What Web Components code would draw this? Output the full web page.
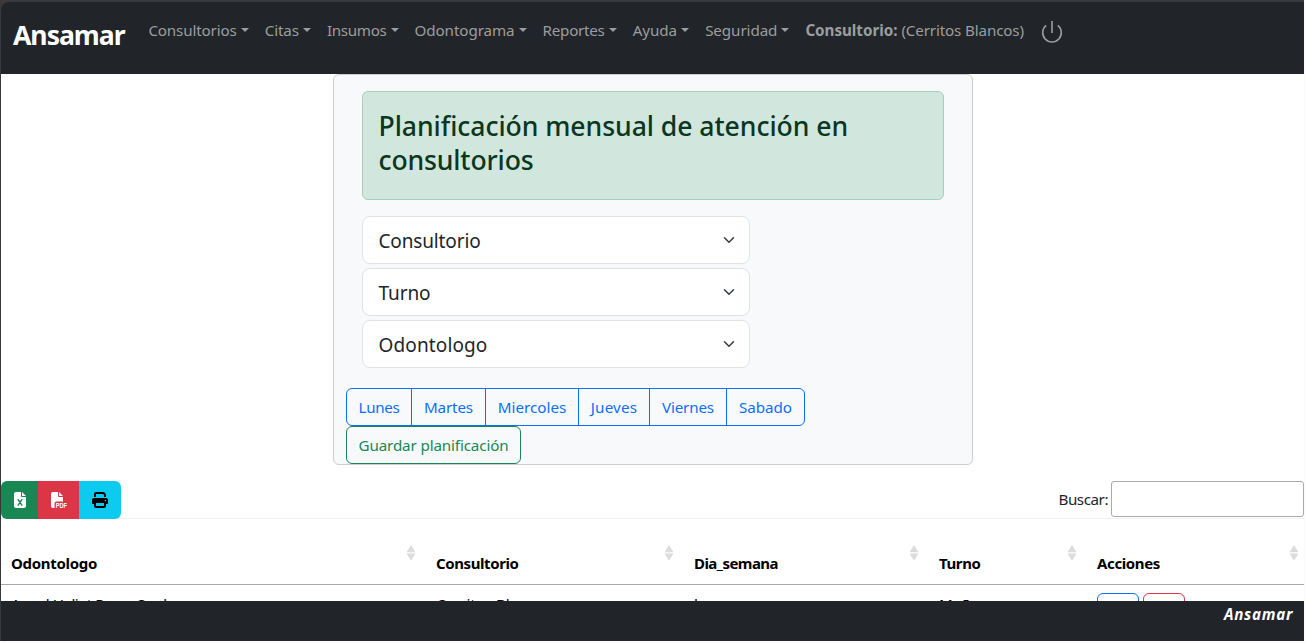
<!DOCTYPE html>
<html lang="es">
<head>
<meta charset="utf-8">
<title>Ansamar</title>
<style>
html,body{margin:0;height:100%;overflow:hidden}
body{font-family:"Noto Sans","Open Sans",sans-serif;font-size:15.2px;line-height:24px;color:#212529;background:#fcfcfc}
</style>
</head>
<body>
<app-shell>
  <nav-bar slot="top">
    <nav-item w="88.2">Consultorios</nav-item>
    <nav-item w="34.3">Citas</nav-item>
    <nav-item w="59.4">Insumos</nav-item>
    <nav-item w="100">Odontograma</nav-item>
    <nav-item w="62">Reportes</nav-item>
    <nav-item w="44.4">Ayuda</nav-item>
    <nav-item w="72.2">Seguridad</nav-item>
  </nav-bar>
  <plan-card>
    <plan-select w="102">Consultorio</plan-select>
    <plan-select w="52">Turno</plan-select>
    <plan-select w="109">Odontologo</plan-select>
    <day-group slot="days"></day-group>
  </plan-card>
  <table-tools></table-tools>
  <plan-table></plan-table>
  <page-footer slot="bottom"><fit-text w="69">Ansamar</fit-text></page-footer>
</app-shell>
<script>
function define(name, html, ready) {
  const tpl = document.createElement('template');
  tpl.innerHTML = html;
  customElements.define(name, class extends HTMLElement {
    constructor() {
      super();
      this.attachShadow({mode: 'open'}).append(tpl.content.cloneNode(true));
    }
    connectedCallback() { if (ready) ready(this, this.shadowRoot); }
  });
}

define('app-shell', `<style>
:host{display:flex;flex-direction:column;box-sizing:border-box;width:1304px;height:641px;border-left:1px solid #38383a;border-top:2px solid #3a3a3b;background:#3a3a3b}
main{flex:1;min-height:0;overflow:hidden;background:#fff}
</style><slot name="top"></slot><main><slot></slot></main><slot name="bottom"></slot>`);

define('nav-bar', `<style>
:host{display:flex;align-items:flex-start;height:72px;flex:none;background:#212529;border-top-left-radius:8px;color:#9b9d9e;box-sizing:border-box;padding-left:12px}
.brand{font-weight:700;font-size:26.6px;line-height:40px;color:#fff;margin:13px 14.4px 0 0;width:113px}
nav{display:flex;margin-top:8px}
.office{padding:8px 8px 0;display:flex;gap:4px;line-height:24px;margin-top:8px}
svg{margin:18px 0 0 9.4px}
</style>
<div class="brand"><fit-text w="111.5">Ansamar</fit-text></div>
<nav><slot></slot></nav>
<div class="office"><b><fit-text w="92">Consultorio:</fit-text></b><fit-text w="122.5">(Cerritos Blancos)</fit-text></div>
<svg width="22" height="24" viewBox="0 0 22 24" fill="none" stroke="#9b9d9e" stroke-width="1.6"><path d="M11 1v12M5.2 5.4a9.3 9.3 0 1 0 11.6 0"/></svg>`);

define('nav-item', `<style>
:host{display:flex;padding:8px 8px 0;line-height:24px}
i{width:0;height:0;border:4px solid transparent;border-top-color:currentColor;border-bottom:0;margin:10px 0 0 4.08px}
</style><fit-text><slot></slot></fit-text><i></i>`, (el, root) => {
  root.querySelector('fit-text').setAttribute('w', el.getAttribute('w'));
});

define('plan-card', `<style>
:host{display:block;box-sizing:border-box;width:640px;height:391px;margin:0 0 16px 332px;border:1px solid #cbccce;border-radius:6px;background:#f8f9fb;padding:16px 12px 0}
.body{padding:0 16px}
h3{box-sizing:border-box;height:109px;margin:0 0 16px;padding:17px 16px 0 15.5px;border:1px solid #a3cfbb;border-radius:6px;background:#d1e7dd;color:#0a3622;font-size:26.6px;line-height:34px;font-weight:500}
h3 fit-text{display:block}
.selects{display:grid;gap:4px;width:388px;margin-bottom:20px}
</style>
<div class="body"><h3><fit-text w="469.5">Planificación mensual de atención en</fit-text><fit-text w="155">consultorios</fit-text></h3>
<div class="selects"><slot></slot></div></div><slot name="days"></slot>`);

define('plan-select', `<style>
:host{display:flex;justify-content:space-between;align-items:center;box-sizing:border-box;height:48px;padding:1px 12px 0 15.5px;border:1px solid #dee2e6;border-radius:8px;background:#fff;font-size:19px;line-height:30px}
svg{margin-top:-2px}
</style><fit-text><slot></slot></fit-text><svg width="16" height="12" viewBox="0 0 16 16" fill="none" stroke="#343a40" stroke-linecap="round" stroke-linejoin="round" stroke-width="2"><path d="m2 5 6 6 6-6"/></svg>`, (el, root) => {
  root.querySelector('fit-text').setAttribute('w', el.getAttribute('w'));
});

define('day-group', `<style>
:host{display:block;color:#0d6efd}
.days{display:flex;box-sizing:border-box;width:459px;height:38px;border:1px solid #0d6efd;border-radius:6px}
.days span,.save{display:flex;justify-content:center;align-items:center}
.days span{box-sizing:border-box;border-right:1px solid #0d6efd}
.days span:last-child{border:0}
.save{box-sizing:border-box;width:175px;height:38px;border:1px solid #198754;border-radius:6px;color:#198754}
</style>
<div class="days">
<span style="width:65px"><fit-text w="41">Lunes</fit-text></span>
<span style="width:74px"><fit-text w="49">Martes</fit-text></span>
<span style="width:93px"><fit-text w="68.5">Miercoles</fit-text></span>
<span style="width:71px"><fit-text w="46.5">Jueves</fit-text></span>
<span style="width:77px"><fit-text w="52">Viernes</fit-text></span>
<span style="width:77px"><fit-text w="53">Sabado</fit-text></span>
</div><div class="save"><fit-text w="150">Guardar planificación</fit-text></div>`);

define('table-tools', `<style>
:host{display:flex;justify-content:space-between;align-items:flex-start;height:38px}
.export{display:flex;height:38px;position:relative}
.export span{display:flex;justify-content:center;align-items:center}
.export span:first-child{border-radius:6px 0 0 6px}
.export span:last-child{border-radius:0 6px 6px 0}
.export svg{overflow:visible}
label{display:flex;align-items:center;gap:3px}
input{box-sizing:border-box;width:193px;height:36px;border:1px solid #aaa;border-radius:3px;background:#fff;margin:0}
</style>
<div class="export">
<span style="width:37px;background:#198754"><svg width="12" height="16" viewBox="0 0 384 512"><path fill="#fff" d="M64 0C28.700 0 0 28.700 0 64V448c0 35.300 28.700 64 64 64H320c35.300 0 64-28.700 64-64V160H256c-17.700 0-32-14.300-32-32V0H64zM256 0V128H384L256 0z"/><path fill="none" stroke="#198754" stroke-width="48" stroke-linecap="round" d="M132 246l120 172M252 246l-120 172"/></svg></span>
<span style="width:41px;background:#dc3545"><svg width="16" height="16" viewBox="0 0 512 512"><path fill="#fff" d="M0 64C0 28.700 28.700 0 64 0H224V128c0 17.700 14.300 32 32 32H384V304H176c-35.300 0-64 28.700-64 64V512H64c-35.300 0-64-28.700-64-64V64zm384 64H256V0L384 128z"/><text x="150" y="508" textLength="362" lengthAdjust="spacingAndGlyphs" font-family="Liberation Sans" font-weight="bold" font-size="212" fill="#fff">PDF</text></svg></span>
<span style="width:42px;background:#0dcaf0"><svg width="16" height="16" viewBox="0 0 512 512"><path d="M128 0C92.700 0 64 28.700 64 64v96h64V64H354.700L384 93.300V160h64V93.300c0-17-6.700-33.300-18.700-45.300L400 18.700C388 6.700 371.700 0 354.700 0H128zM384 352v96H128V352H384zm64 32h32c17.700 0 32-14.300 32-32V256c0-35.300-28.700-64-64-64H64c-35.300 0-64 28.700-64 64v96c0 17.700 14.300 32 32 32H64v64c0 35.300 28.700 64 64 64H384c35.300 0 64-28.700 64-64V384zM432 248a24 24 0 1 1 0 48 24 24 0 1 1 0-48z"/></svg></span>
</div>
<label><fit-text w="49.5">Buscar:</fit-text><input></label>`);

define('plan-table', `<style>
:host{display:block;margin-top:-1px;width:1303px;overflow:hidden;color:#000}
.head,.row{display:grid;grid-template-columns:425px 258px 245px 158px 222px}
.head{box-sizing:border-box;height:67px;border-top:1px solid #f1f1f1;border-bottom:1px solid #aaa;font-weight:700;font-size:15px}
.head>div{display:flex;justify-content:space-between;padding:32px 10px 0}
.head svg{margin-top:-6px}
.row>div{padding:7px 10px 8px;white-space:nowrap}
.row>.actions{display:flex;gap:4px;padding-top:8px}
.actions span{box-sizing:border-box;width:42px;height:38px;border:1px solid #0d6efd;border-radius:6px}
.actions span+span{border-color:#dc3545}
</style>
<div class="head"></div>
<div class="row"><div><fit-text w="181">Angel Heliot Perez Cardona</fit-text></div><div><fit-text w="115">Cerritos Blancos</fit-text></div><div>lunes</div><div>Mañana</div><div class="actions"><span></span><span></span></div></div>`, (el, root) => {
  const columns = [['Odontologo', 86], ['Consultorio', 82.5], ['Dia_semana', 84], ['Turno', 41.5], ['Acciones', 63]];
  root.querySelector('.head').innerHTML = columns.map(([label, w]) =>
    `<div><fit-text w="${w}">${label}</fit-text><svg width="10" height="16" viewBox="0 0 10 16" fill="#dcdcdc"><path d="M5 0l4.500 7.300h-9zM.5 8.500h9L5 15.800z"/></svg></div>`).join('');
});

define('page-footer', `<style>
:host{display:flex;justify-content:flex-end;box-sizing:border-box;height:40px;flex:none;padding:1px 11px 0 0;background:#212529;color:#fff;font-weight:700;font-style:italic;font-size:15.2px}
</style><slot></slot>`);

/* Inline label that spreads its letters so the text takes exactly w pixels. */
define('fit-text', `<style>
:host{display:inline-block;white-space:nowrap}
span{display:inline-block}
</style><span><slot></slot></span>`, (el, root) => {
  const target = parseFloat(el.getAttribute('w'));
  let text = el.textContent.trim();
  if (!text && el.getRootNode().host) text = el.getRootNode().host.textContent.trim();
  const span = root.querySelector('span');
  const natural = span.getBoundingClientRect().width;
  span.style.letterSpacing = ((target - natural) / text.length) + 'px';
  el.style.width = target + 'px';
});
</script>
</body>
</html>
